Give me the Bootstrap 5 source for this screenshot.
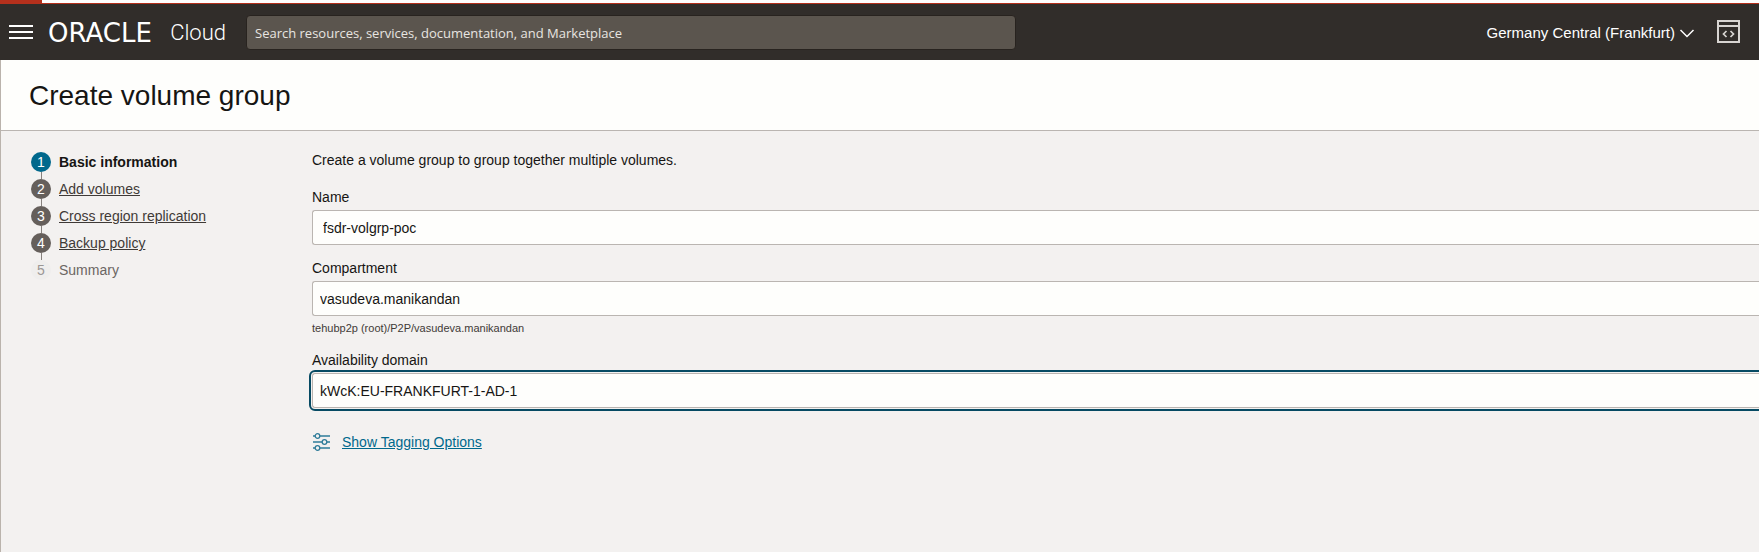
<!DOCTYPE html>
<html lang="en">
<head>
<meta charset="utf-8">
<meta name="viewport" content="width=device-width, initial-scale=1">
<title>Create volume group</title>
<link href="https://cdn.jsdelivr.net/npm/bootstrap@5.3.0/dist/css/bootstrap.min.css" rel="stylesheet">
<style>
  body { font-family: "Liberation Sans", Arial, sans-serif; font-size: 14px; line-height: 20px; color: #161513; background: #f3f1f0; }
  .load-track { height: 4px; background: #fff; border-bottom: 1px solid #b5301c; }
  .load-bar { height: 3px; background: #b5301c; }
  .topbar { height: 56px; background: #312d2a; color: #fff; }
  .topbar button { color: inherit; background: none; border: 0; padding: 0; }
  .brand { color: #fff; margin: 0 20px 0 14px; padding-top: 2px; width: 178px; }
  .brand-name { font: 26px/26px "DejaVu Sans", sans-serif; }
  .brand-product { font: 300 22px/26px Roboto, sans-serif; }
  .search-box { height: 35px; max-width: 770px; font: 13px/20px "Open Sans", sans-serif; background: #5b554e; border: 1px solid #28231f; border-radius: 4px; padding: 2px 8px 0; color: #e8e5e1; }
  .search-box::placeholder { color: #e8e5e1; opacity: 1; }
  .region { font-size: 15px; padding-top: 2px !important; }
  .tools { margin: 0 16px 0 22px; }
  .page { border-left: 1px solid #bab3ac; }
  .page-head { height: 71px; background: #fefefc; border-bottom: 1px solid #bab5b1; padding: 2px 0 0 28px; }
  .page-head h1 { font-size: 28px; line-height: 32px; font-weight: 400; }
  .steps { width: 311px; padding: 21px 0 0 30px; }
  .steps li { height: 27px; gap: 8px; }
  .steps a { color: #3f3a37; }
  .step-no { width: 20px; height: 20px; border-radius: 50%; background: #655f5b; color: #fff; text-align: center; }
  .steps li:not(:last-child) .step-no::after { content: ""; display: block; width: 1px; height: 7px; margin-left: 10px; background: #86817d; }
  .step-now { background: #00688c; }
  .step-off { background: #efeeed; color: #9b9795; }
  .step-label-off { color: #6b6663; }
  .group-form { padding-top: 19px; }
  .intro { margin-bottom: 17px; }
  .form-line { margin-bottom: 13px; }
  .form-line label { display: block; margin-bottom: 3px; }
  .field { height: 35px; font-size: 14px; line-height: 20px; color: #161513; background: #fefefc; border: 1px solid #bab5b1; border-right: 0; border-radius: 3px 0 0 3px; padding: 0 7px; appearance: none; }
  input.field { padding: 0 10px; }
  .field-active { outline: 2px solid #064a63; outline-offset: 1px; }
  .path-note { font-size: 11px; line-height: 17px; color: #3f3a37; }
  .tag-link { color: #00688c; margin-top: 11px; gap: 12px; }
</style>
</head>
<body class="d-flex flex-column min-vh-100">
<div class="load-track"><div class="load-bar" style="width:2.4%"></div></div>
<header class="topbar d-flex align-items-center">
  <button type="button" class="ms-2 d-flex" aria-label="Menu">
    <svg width="26" height="16" viewBox="0 0 26 16"><path d="M1 2h24M1 8h24M1 14h24" stroke="#fff" stroke-width="2"/></svg>
  </button>
  <a href="#" class="brand d-flex justify-content-between flex-shrink-0 text-decoration-none"><span class="brand-name">ORACLE</span><span class="brand-product">Cloud</span></a>
  <input type="search" class="search-box w-100" aria-label="Search" placeholder="Search resources, services, documentation, and Marketplace">
  <button type="button" class="region ms-auto d-flex align-items-center text-nowrap">Germany Central (Frankfurt)
    <svg class="ms-1" width="16" height="12" viewBox="0 0 16 12"><path d="M1.500 3l6.500 6.500L14.500 3" fill="none" stroke="#fff" stroke-width="1.500"/></svg>
  </button>
  <button type="button" class="tools d-flex" aria-label="Developer tools">
    <svg width="26" height="24" viewBox="0 0 26 24" fill="none" stroke="#d8d5d2" stroke-width="2"><path d="M1 1h21v21H1zM1 6h21"/><path d="M9.500 11l-3 3 3 3M13.500 11l3 3-3 3" stroke-width="1.700"/></svg>
  </button>
</header>
<div class="page flex-grow-1">
  <div class="page-head d-flex align-items-center"><h1 class="mb-0">Create volume group</h1></div>
  <main class="d-flex">
    <nav class="flex-shrink-0" aria-label="Steps">
      <ol class="steps list-unstyled m-0">
        <li class="d-flex"><span class="step-no step-now">1</span><strong>Basic information</strong></li>
        <li class="d-flex"><span class="step-no">2</span><a href="#">Add volumes</a></li>
        <li class="d-flex"><span class="step-no">3</span><a href="#">Cross region replication</a></li>
        <li class="d-flex"><span class="step-no">4</span><a href="#">Backup policy</a></li>
        <li class="d-flex"><span class="step-no step-off">5</span><span class="step-label-off">Summary</span></li>
      </ol>
    </nav>
    <form class="group-form flex-grow-1">
      <p class="intro">Create a volume group to group together multiple volumes.</p>
      <div class="form-line">
        <label for="name">Name</label>
        <input id="name" class="field d-block w-100" type="text" value="fsdr-volgrp-poc">
      </div>
      <div class="form-line">
        <label for="compartment">Compartment</label>
        <select id="compartment" class="field d-block w-100"><option>vasudeva.manikandan</option></select>
        <div class="path-note mt-1">tehubp2p (root)/P2P/vasudeva.manikandan</div>
      </div>
      <div class="form-line">
        <label for="domain">Availability domain</label>
        <select id="domain" class="field field-active d-block w-100"><option>kWcK:EU-FRANKFURT-1-AD-1</option></select>
      </div>
      <a href="#" class="tag-link d-inline-flex align-items-center text-decoration-none">
        <svg width="18" height="20" viewBox="0 0 18 20" fill="none" stroke="#2f7c99" stroke-width="1.300"><path d="M1 4h2M8 4h10M1 10h9M15 10h3M1 16h2M8 16h10"/><circle cx="5.500" cy="4" r="2.300"/><circle cx="12.500" cy="10" r="2.300"/><circle cx="5.500" cy="16" r="2.300"/></svg>
        <span class="text-decoration-underline">Show Tagging Options</span>
      </a>
    </form>
  </main>
</div>
<script src="https://cdn.jsdelivr.net/npm/bootstrap@5.3.0/dist/js/bootstrap.bundle.min.js"></script>
</body>
</html>
